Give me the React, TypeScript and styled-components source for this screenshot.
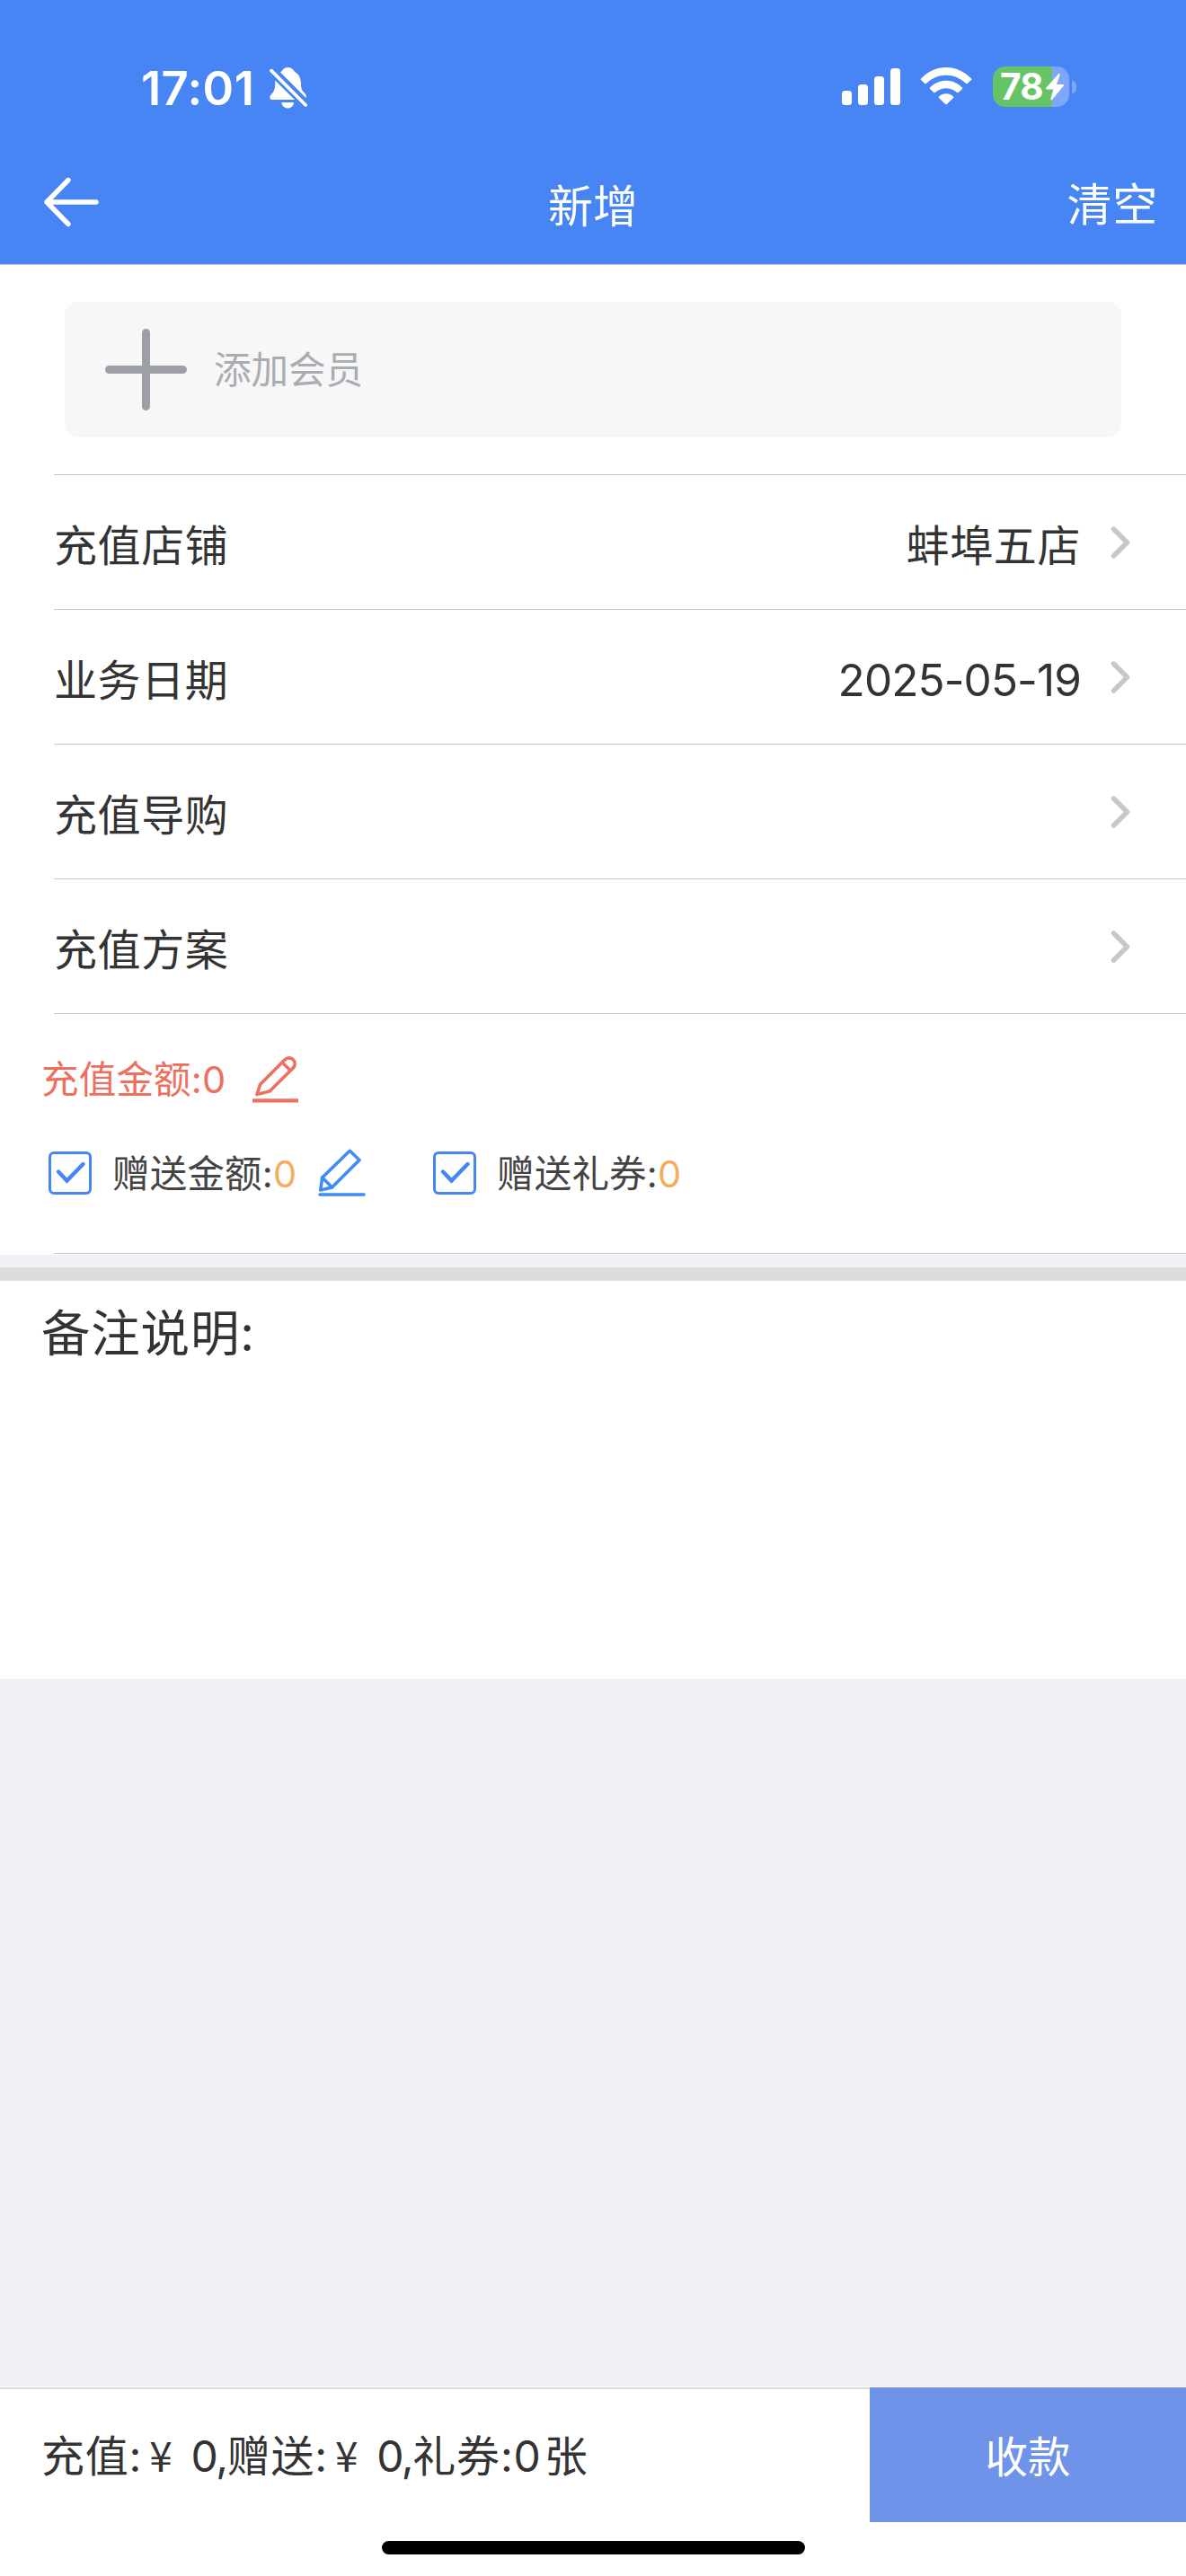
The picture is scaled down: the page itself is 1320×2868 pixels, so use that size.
import React from "react";
import styled, { createGlobalStyle } from "styled-components";

const GlobalStyle = createGlobalStyle`
  * { box-sizing: border-box; }
  html, body { margin: 0; padding: 0; background: #f0f0f5; }
  body { font-family: Inter, "Noto Sans CJK SC", sans-serif; color: #333; -webkit-font-smoothing: antialiased; }
  svg { display: block; flex: none; }
`;

const Screen = styled.div`
  width: 1320px;
  height: 2868px;
  display: flex;
  flex-direction: column;
  background: #f0f0f5;
  overflow: hidden;
`;

const Header = styled.header`
  height: 295px;
  background: #4784f4;
  border-bottom: 1px solid #c3c4c8;
  color: #fff;
`;

const StatusBar = styled.div`
  display: flex;
  justify-content: space-between;
  height: 150px;
  padding: 74px 122px 0 157px;
`;

const StatusGroup = styled.div`
  display: flex;
  align-items: flex-start;
`;

const Time = styled.span`
  width: 143px;
  font-size: 52.5px;
  font-weight: 600;
  line-height: 48px;
  letter-spacing: 0.4px;
  white-space: nowrap;
`;

const Signal = styled.div`
  display: flex;
  align-items: flex-end;
  gap: 7px;
  height: 43px;
  margin-right: 22px;
`;

const SignalBar = styled.i<{ $height: number }>`
  width: 11px;
  height: ${(p) => p.$height}px;
  border-radius: 3.5px;
  background: #fff;
`;

const Battery = styled.div`
  display: flex;
  align-items: center;
  gap: 3px;
  margin-left: 23px;
`;

const BatteryBody = styled.div`
  display: flex;
  align-items: center;
  width: 85px;
  height: 45px;
  padding-left: 8px;
  border-radius: 14px;
  background: linear-gradient(90deg, #67c466 66px, #7ea8f7 66px);
`;

const BatteryLevel = styled.span`
  width: 51px;
  font-size: 40.5px;
  font-weight: 700;
  line-height: 45px;
  letter-spacing: -0.8px;
`;

const BatteryTip = styled.i`
  width: 5px;
  height: 14px;
  border-radius: 0 5px 5px 0;
  background: #7ea8f7;
`;

const NavBar = styled.nav`
  display: grid;
  grid-template-columns: 1fr auto 1fr;
  align-items: center;
  height: 144px;
  padding: 0 31px;
`;

const BackButton = styled.div`
  padding: 6px 0 0 17px;
`;

const NavTitle = styled.h1`
  margin: 0;
  padding-top: 16px;
  font-size: 50px;
  font-weight: 400;
  line-height: 60px;
`;

const ClearButton = styled.span`
  justify-self: end;
  padding-top: 12px;
  font-size: 50px;
  line-height: 60px;
  letter-spacing: 0.8px;
`;

const Form = styled.section`
  height: 1102px;
  background: #fff;
`;

const MemberArea = styled.div`
  height: 233px;
  padding: 41px 72px 0;
`;

const MemberCard = styled.div`
  display: flex;
  align-items: center;
  gap: 30px;
  height: 151px;
  padding-left: 45px;
  border-radius: 15px;
  background: #f7f7f7;
  color: #a9acb2;
  font-size: 41.5px;
  line-height: 60px;
`;

const Row = styled.div`
  display: flex;
  align-items: center;
  height: 150px;
  margin-left: 60px;
  padding-right: 62px;
  border-top: 1px solid #c6c6c6;
  font-size: 48px;
`;

const RowLabel = styled.span`
  flex: 1;
  padding-top: 8px;
  line-height: 60px;
  letter-spacing: 0.6px;
`;

const RowValue = styled.span<{ $latin?: boolean }>`
  padding-top: ${(p) => (p.$latin ? 6 : 8)}px;
  margin-right: 33px;
  line-height: 60px;
  font-size: ${(p) => (p.$latin ? "49.5px" : "48px")};
  letter-spacing: ${(p) => (p.$latin ? "-0.9px" : "0.6px")};
`;

const Amounts = styled.div`
  display: flex;
  flex-direction: column;
  height: 268px;
  margin-left: 60px;
  border-top: 1px solid #c6c6c6;
  border-bottom: 1px solid #c6c6c6;
`;

const AmountLine = styled.div<{ $top: number }>`
  display: flex;
  align-items: center;
  height: 60px;
  margin: ${(p) => p.$top}px 0 0 -14px;
  font-size: 41.5px;
  line-height: 60px;
  letter-spacing: 0.2px;
`;

const RechargeAmount = styled.span`
  width: 235px;
  color: #ed6f5e;
`;

const GiftOption = styled.label<{ $width: number }>`
  display: flex;
  align-items: center;
  width: ${(p) => p.$width}px;
  padding-left: 8px;
  color: #444;
`;

const GiftText = styled.span`
  margin-left: 23px;
  padding-top: 1px;
`;

const Highlight = styled.b`
  font-weight: 400;
  color: #f4ac5f;
`;

const Divider = styled.div`
  height: 29px;
  border-bottom: 15px solid #ddd;
`;

const Remark = styled.section`
  height: 443px;
  padding: 25px 46px;
  background: #fff;
  font-size: 54.5px;
  line-height: 66px;
  letter-spacing: 0.8px;
`;

const Spacer = styled.div`
  flex: 1;
`;

const Footer = styled.footer`
  height: 211px;
  background: #fff;
  padding-top: 1px;
`;

const FooterBar = styled.div`
  display: flex;
  height: 150px;
`;

const Summary = styled.div`
  flex: 1;
  padding: 45px 0 0 46px;
  border-top: 2px solid #ddd;
  font-size: 48px;
  line-height: 60px;
  letter-spacing: 0.8px;
  word-spacing: -9px;
  white-space: nowrap;
`;

const Yen = styled.span`
  display: inline-block;
  width: 49px;
  padding-left: 8px;
  font-family: "Noto Sans CJK SC", sans-serif;
  font-size: 46px;
  line-height: 50px;
`;

const Figure = styled.span`
  letter-spacing: -1.4px;
`;

const PayButton = styled.div`
  display: flex;
  align-items: center;
  justify-content: center;
  width: 352px;
  padding-bottom: 1px;
  background: #6e93e8;
  color: #fff;
  font-size: 47.5px;
`;

const HomeIndicator = styled.div`
  width: 471px;
  height: 15px;
  margin: 21px auto 0;
  border-radius: 8px;
  background: #000;
`;

const BellOff = () => (
  <svg width="42" height="47" viewBox="0 0 42 47" fill="#fff">
    <path d="M12 6.5C14 5.8 15 1 20.500 1C26 1 27 5.500 29 6.500C33.500 9.500 34.500 13 35 19C35.200 24 35.500 26 38 28.500C40 30.500 41.500 32 40.500 35Z" />
    <path d="M6.200 15.500L28 37H3C0 37 -0.500 33.500 1.500 31.500C5.500 28 6.500 24.500 6.200 15.500Z" />
    <path d="M13.500 40H27C27 44 23.500 46.500 20.200 46.500C17 46.500 13.500 44 13.500 40Z" />
    <path d="M2 4.700L40.200 43" stroke="#fff" strokeWidth="3.8" strokeLinecap="round" />
  </svg>
);

const Wifi = () => (
  <svg width="58" height="43" viewBox="0 0 58 43" fill="#fff">
    <path d="M1 13.500C16.500-3.300 41.500-3.300 57 13.500Q57.700 14.200 57 15L52.800 19Q52 19.700 51.200 19C38.500 6.500 19.500 6.500 6.800 19Q6 19.700 5.200 19L1 15Q.3 14.200 1 13.500Z" />
    <path d="M11 23.500C21.500 13.200 36.500 13.200 47 23.500Q47.700 24.200 47 25L42.700 29Q42 29.700 41.200 29C34 22.500 24 22.500 16.800 29Q16 29.700 15.300 29L11 25Q10.300 24.200 11 23.500Z" />
    <path d="M21 33.500C25.500 29.200 32.500 29.200 37 33.500Q37.700 34.200 37 35L29.800 42Q29 42.700 28.200 42L21 35Q20.300 34.200 21 33.500Z" />
  </svg>
);

const Bolt = () => (
  <svg width="20" height="30" viewBox="0 0 20 30" fill="#fff">
    <path d="M14 .4C15-.3 16 .3 15.600 1.500L12 12H19C20 12 20.300 12.800 19.600 13.700L7 29C6.200 29.900 5 29.300 5.400 28L8.500 17.500H1C0 17.500-.3 16.500.5 15.600Z" />
  </svg>
);

const BackArrow = () => (
  <svg width="64" height="58" viewBox="0 0 64 58" fill="none" stroke="#fff" strokeWidth="5.4" strokeLinecap="round" strokeLinejoin="round">
    <path d="M28 4.500L4 29L28 53.500M4 29H59" />
  </svg>
);

const Plus = () => (
  <svg width="91" height="91" viewBox="0 0 91 91" stroke="#9c9fa5" strokeWidth="9" strokeLinecap="round">
    <path d="M45.500 4.500V86.500M4.500 45.500H86.500" />
  </svg>
);

const Chevron = () => (
  <svg width="22" height="38" viewBox="0 0 22 38" fill="none" stroke="#c7c7c7" strokeWidth="5.4" strokeLinecap="round" strokeLinejoin="round">
    <path d="M3.500 4L18.500 19L3.500 34" />
  </svg>
);

const Check = () => (
  <svg width="48" height="48" viewBox="0 0 48 48" fill="none" stroke="#4585f4" strokeLinecap="round">
    <rect x="1.500" y="1.500" width="45" height="45" rx="4.500" strokeWidth="3" />
    <path d="M11 22.500L20.500 32.500L38.500 14" strokeWidth="4.400" />
  </svg>
);

const RedPencil = () => (
  <svg width="52" height="52" viewBox="0 0 52 52" fill="none" stroke="#ed7163" strokeWidth="3.700" strokeLinejoin="round">
    <path d="M5 42.500L8.500 31.500L35.500 4.300C38.500 1.200 42.500 1 45.200 3.700C47.800 6.300 47.800 10.300 45 13.300L19 39Z" />
    <path d="M33 7L42.500 16" />
    <path d="M0 49.300H51" strokeWidth="4.200" />
  </svg>
);

const BluePencil = () => (
  <svg width="53" height="54" viewBox="0 0 53 54" fill="none" stroke="#3f8cf7" strokeWidth="3.600" strokeLinejoin="round" strokeLinecap="round">
    <path d="M2.700 46L4.700 32L35.300 2.300L46 12.500L15.500 43Z" />
    <path d="M4.700 32L15.500 43" />
    <path d="M2 51H51" />
  </svg>
);

const BluePencilSlot = styled.div`
  width: 120px;
`;

const rows = [
  { label: "充值店铺", value: "蚌埠五店" },
  { label: "业务日期", value: "2025-05-19", latin: true },
  { label: "充值导购", value: "" },
  { label: "充值方案", value: "" },
];

export default function App() {
  return (
    <Screen>
      <GlobalStyle />
      <Header>
        <StatusBar>
          <StatusGroup>
            <Time>17:01</Time>
            <BellOff />
          </StatusGroup>
          <StatusGroup>
            <Signal>
              {[16, 23, 32, 41].map((h) => (
                <SignalBar key={h} $height={h} />
              ))}
            </Signal>
            <Wifi />
            <Battery>
              <BatteryBody>
                <BatteryLevel>78</BatteryLevel>
                <Bolt />
              </BatteryBody>
              <BatteryTip />
            </Battery>
          </StatusGroup>
        </StatusBar>
        <NavBar>
          <BackButton><BackArrow /></BackButton>
          <NavTitle>新增</NavTitle>
          <ClearButton>清空</ClearButton>
        </NavBar>
      </Header>

      <Form>
        <MemberArea>
          <MemberCard>
            <Plus />
            <span>添加会员</span>
          </MemberCard>
        </MemberArea>
        {rows.map((row) => (
          <Row key={row.label}>
            <RowLabel>{row.label}</RowLabel>
            <RowValue $latin={row.latin}>{row.value}</RowValue>
            <Chevron />
          </Row>
        ))}
        <Amounts>
          <AmountLine $top={43}>
            <RechargeAmount>充值金额:0</RechargeAmount>
            <RedPencil />
          </AmountLine>
          <AmountLine $top={44}>
            <GiftOption $width={308}>
              <Check />
              <GiftText>赠送金额:<Highlight>0</Highlight></GiftText>
            </GiftOption>
            <BluePencilSlot><BluePencil /></BluePencilSlot>
            <GiftOption $width={300}>
              <Check />
              <GiftText>赠送礼券:<Highlight>0</Highlight></GiftText>
            </GiftOption>
          </AmountLine>
        </Amounts>
      </Form>
      <Divider />
      <Remark>备注说明:</Remark>
      <Spacer />
      <Footer>
        <FooterBar>
          <Summary>
            充值:<Yen>¥</Yen> <Figure>0,</Figure>赠送:<Yen>¥</Yen> <Figure>0,</Figure>礼券:<Figure>0</Figure> 张
          </Summary>
          <PayButton>收款</PayButton>
        </FooterBar>
        <HomeIndicator />
      </Footer>
    </Screen>
  );
}
